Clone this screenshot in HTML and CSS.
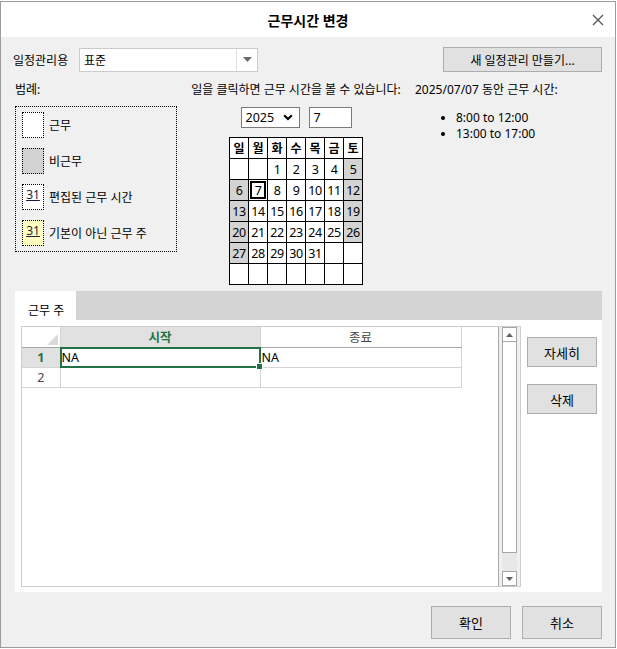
FILE: index.html
```html
<!DOCTYPE html>
<html lang="ko">
<head>
    <meta charset="UTF-8">
    <meta name="viewport" content="width=device-width, initial-scale=1.0">
    <title>근무시간 변경</title>
    <link rel="stylesheet" href="styles.css">
</head>
<body>
    <div class="dialog">
        <div class="titlebar">
            <span class="title">근무시간 변경</span>
            <span class="close">
                <svg width="12" height="12" viewBox="0 0 12 12"><path d="M1 1 L11 11 M11 1 L1 11" stroke="#5a5a5a" stroke-width="1.4" fill="none"/></svg>
            </span>
        </div>
        <div class="content">
            <div class="schedule-row">
                <span class="label">일정관리용</span>
                <div class="combo">
                    <span class="combo-text">표준</span>
                    <span class="combo-arrow">
                        <svg width="9" height="5" viewBox="0 0 9 5"><path d="M0 0 H9 L4.5 5 Z" fill="#6a6a6a"/></svg>
                    </span>
                </div>
                <button class="btn btn-new">새 일정관리 만들기...</button>
            </div>

            <div class="info">
                <div class="legend-col">
                    <div class="caption">범례:</div>
                    <div class="legend">
                        <div class="legend-item"><span class="swatch"></span>근무</div>
                        <div class="legend-item"><span class="swatch swatch-off"></span>비근무</div>
                        <div class="legend-item"><span class="swatch"><u>31</u></span>편집된 근무 시간</div>
                        <div class="legend-item"><span class="swatch swatch-week"><u>31</u></span>기본이 아닌 근무 주</div>
                    </div>
                </div>

                <div class="cal-col">
                    <div class="caption">일을 클릭하면 근무 시간을 볼 수 있습니다:</div>
                    <div class="cal-controls">
                        <div class="year-select">
                            <span>2025</span>
                            <svg width="10" height="7" viewBox="0 0 10 7"><path d="M1.2 1.2 L5 5 L8.8 1.2" stroke="#000" stroke-width="2" fill="none"/></svg>
                        </div>
                        <div class="month-input">7</div>
                    </div>
                    <div class="calendar" id="calendar"></div>
                </div>

                <div class="times-col">
                    <div class="caption">2025/07/07 동안 근무 시간:</div>
                    <ul class="times">
                        <li>8:00 to 12:00</li>
                        <li>13:00 to 17:00</li>
                    </ul>
                </div>
            </div>

            <div class="tabs">
                <div class="tab-strip">
                    <div class="tab active">근무 주</div>
                </div>
                <div class="tab-panel">
                    <div class="sheet-box">
                        <div class="sheet-area">
                            <table class="sheet">
                                <colgroup><col class="c-head"><col class="c-a"><col class="c-b"></colgroup>
                                <tr>
                                    <th class="corner">
                                        <svg width="11" height="11" viewBox="0 0 11 11"><path d="M11 0 V11 H0 Z" fill="#dadada"/></svg>
                                    </th>
                                    <th class="col-head sel">시작</th>
                                    <th class="col-head">종료</th>
                                </tr>
                                <tr>
                                    <th class="row-head sel">1</th>
                                    <td class="active-cell">NA</td>
                                    <td>NA</td>
                                </tr>
                                <tr>
                                    <th class="row-head">2</th>
                                    <td></td>
                                    <td></td>
                                </tr>
                            </table>
                        </div>
                        <div class="scrollbar">
                            <div class="sb-btn">
                                <svg width="7" height="4" viewBox="0 0 7 4"><path d="M0 4 H7 L3.5 0 Z" fill="#606060"/></svg>
                            </div>
                            <div class="sb-thumb"></div>
                            <div class="sb-track"></div>
                            <div class="sb-btn">
                                <svg width="7" height="4" viewBox="0 0 7 4"><path d="M0 0 H7 L3.5 4 Z" fill="#606060"/></svg>
                            </div>
                        </div>
                    </div>
                    <div class="side-buttons">
                        <button class="btn btn-side">자세히</button>
                        <button class="btn btn-side">삭제</button>
                    </div>
                </div>
            </div>

            <div class="footer">
                <button class="btn btn-footer">확인</button>
                <button class="btn btn-footer">취소</button>
            </div>
        </div>
    </div>
    <script>
        let cal = document.getElementById('calendar');
        let days = ['일', '월', '화', '수', '목', '금', '토'];
        days.forEach((d) => {
            let cell = document.createElement('div');
            cell.classList.add('cal-cell', 'cal-head');
            cell.textContent = d;
            cal.appendChild(cell);
        });
        // July 2025 starts on a Tuesday
        let start = 2;
        for (let i = 0; i < 42; i++) {
            let day = i - start + 1;
            let cell = document.createElement('div');
            cell.classList.add('cal-cell');
            if (day >= 1 && day <= 31) {
                cell.textContent = day;
                let col = i % 7;
                if (col === 0 || col === 6) cell.classList.add('off');
                if (day === 7) cell.classList.add('selected');
            }
            cal.appendChild(cell);
        }
    </script>
</body>
</html>
```

FILE: styles.css
```css
* {
    box-sizing: border-box;
}
body {
    margin: 0;
    background: #fff;
    font-family: "Noto Sans", "Noto Sans CJK KR", sans-serif;
    font-size: 12px;
    color: #000;
}
.dialog {
    margin-top: 1px;
    width: 616px;
    height: 647px;
    border: 1px solid #9c9c9c;
    background: #f0f0f0;
    display: flex;
    flex-direction: column;
}
.titlebar {
    flex: none;
    position: relative;
    height: 35px;
    background: #fff;
    display: flex;
    align-items: center;
    justify-content: center;
}
.title {
    font-size: 14px;
    font-weight: bold;
    padding-top: 1px;
}
.close {
    position: absolute;
    right: 11px;
    top: 12px;
    line-height: 0;
}
.content {
    flex: 1;
    padding: 10px 13px 0 12px;
    display: flex;
    flex-direction: column;
}
.btn {
    font-family: inherit;
    font-size: 12px;
    color: #000;
    background: #e1e1e1;
    border: 1px solid #adadad;
    padding: 0;
}

/* top row */
.schedule-row {
    display: flex;
    align-items: center;
    height: 25px;
}
.label {
    width: 60px;
}
.combo {
    margin-left: 6px;
    width: 179px;
    height: 24px;
    background: #fff;
    border: 1px solid #cbcbcb;
    display: flex;
    align-items: center;
}
.combo-text {
    flex: 1;
    padding-left: 4px;
}
.combo-arrow {
    width: 21px;
    height: 100%;
    border-left: 1px solid #e0e0e0;
    display: flex;
    align-items: center;
    justify-content: center;
}
.btn-new {
    margin-left: auto;
    width: 159px;
    height: 25px;
}

/* legend / calendar / times */
.info {
    display: flex;
    margin-top: 11px;
}
.caption {
    line-height: 14px;
    height: 14px;
    white-space: nowrap;
}
.legend-col {
    width: 177px;
    padding-left: 2px;
}
.legend {
    margin-top: 9px;
    width: 162px;
    height: 146px;
    border: 1px dotted #000;
    padding: 5px 6px;
}
.legend-item {
    display: flex;
    align-items: center;
    margin-bottom: 10px;
}
.swatch {
    width: 22px;
    height: 26px;
    margin-right: 5px;
    border: 1px dotted #000;
    background: #fff;
    text-align: center;
    padding-top: 2px;
    font-size: 12px;
    color: #1e1e3c;
    line-height: 16px;
}
.swatch-off {
    background: #d3d3d3;
}
.swatch-week {
    background: #ffffc2;
}
.cal-col {
    width: 212px;
    display: flex;
    flex-direction: column;
    align-items: center;
}
.cal-controls {
    margin-top: 10px;
    display: flex;
    gap: 9px;
}
.year-select, .month-input {
    height: 21px;
    background: #fff;
    border: 1px solid #7a7a7a;
    display: flex;
    align-items: center;
    font-size: 12.5px;
    padding-left: 4px;
}
.year-select {
    width: 59px;
    justify-content: space-between;
    padding-right: 6px;
}
.month-input {
    width: 43px;
}
.calendar {
    margin-top: 9px;
    display: grid;
    grid-template-columns: repeat(7, 18px);
    grid-auto-rows: 20px;
    gap: 1px;
    background: #000;
    border: 1px solid #000;
}
.cal-cell {
    background: #fff;
    display: flex;
    align-items: center;
    justify-content: center;
    font-size: 12.5px;
    letter-spacing: -0.5px;
}
.cal-head {
    font-weight: bold;
    font-size: 12px;
    letter-spacing: 0;
}
.cal-cell.off {
    background: #d3d3d3;
}
.cal-cell.selected {
    box-shadow: inset 0 0 0 1px #fff, inset 0 0 0 3px #000;
}
.times-col {
    margin-left: 13px;
}
.times {
    margin: 13px 0 0;
    padding-left: 41px;
    line-height: 16px;
}

/* tab panel */
.tabs {
    margin: 6px 0 0 2px;
}
.tab-strip {
    height: 29px;
    background: #d4d4d4;
    display: flex;
}
.tab {
    width: 61px;
    background: #fff;
    padding: 10px 0 0 13px;
}
.tab-panel {
    height: 272px;
    background: #fff;
    display: flex;
    padding: 6px 5px 5px 6px;
}
.sheet-box {
    width: 500px;
    height: 261px;
    border: 1px solid #cdcdcd;
    display: flex;
}
.sheet-area {
    flex: 1;
}
.sheet {
    border-collapse: collapse;
    table-layout: fixed;
}
.c-head {
    width: 38px;
}
.c-a {
    width: 200px;
}
.c-b {
    width: 201px;
}
.sheet th, .sheet td {
    height: 20px;
    padding: 0;
    border: 1px solid #d4d4d4;
    font-size: 12.5px;
    white-space: nowrap;
}
.sheet tr:first-child th {
    border-top: none;
}
.sheet th:first-child {
    border-left: none;
}
.sheet th {
    font-weight: normal;
    color: #444;
}
.corner {
    text-align: right;
    vertical-align: bottom;
    line-height: 0;
    padding: 0 2px 2px 0 !important;
    border-bottom-color: #a8a8a8 !important;
}
.col-head {
    border-bottom-color: #a8a8a8 !important;
}
.sheet th.sel {
    background: #e1e1e1;
    color: #217346;
    font-weight: bold;
}
.row-head {
    text-align: center;
}
.sheet td {
    padding-left: 1px;
}
.active-cell {
    position: relative;
}
.active-cell::after {
    content: "";
    position: absolute;
    left: -1px;
    top: -1px;
    right: -1px;
    bottom: -1px;
    border: 2px solid #217346;
}
.active-cell::before {
    content: "";
    position: absolute;
    right: -3px;
    bottom: -3px;
    width: 5px;
    height: 5px;
    background: #217346;
    border: 1px solid #fff;
    z-index: 1;
}
.scrollbar {
    width: 22px;
    border-left: 1px solid #a9a9a9;
    background: #f0f0f0;
    padding: 0 3px 0 3px;
    display: flex;
    flex-direction: column;
}
.sb-btn {
    height: 15px;
    background: #fff;
    border: 1px solid #a6a6a6;
    display: flex;
    align-items: center;
    justify-content: center;
}
.sb-thumb {
    height: 211px;
    background: #fff;
    border: 1px solid #a6a6a6;
    border-top: none;
}
.sb-track {
    flex: 1;
    background: #e8e8e8;
}
.side-buttons {
    margin-left: 6px;
    padding-top: 11px;
    display: flex;
    flex-direction: column;
    gap: 17px;
}
.btn-side {
    width: 70px;
    height: 30px;
    font-size: 13px;
}

/* footer */
.footer {
    margin-top: 14px;
    display: flex;
    justify-content: flex-end;
    gap: 11px;
}
.btn-footer {
    width: 80px;
    height: 33px;
    font-size: 13px;
}
```
